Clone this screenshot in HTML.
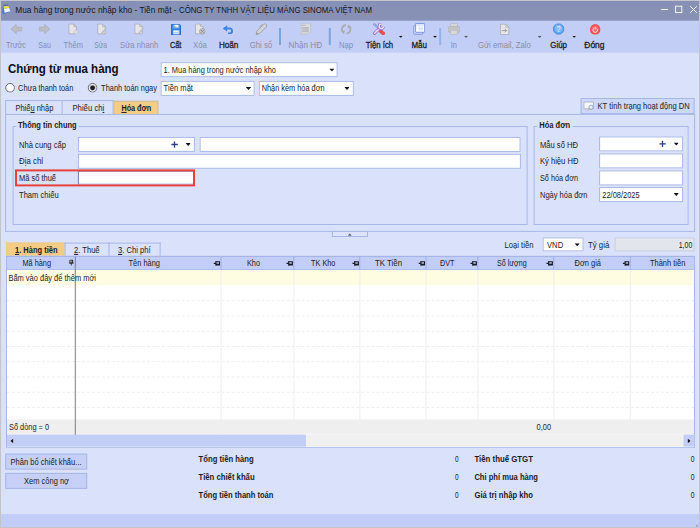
<!DOCTYPE html>
<html lang="vi"><head><meta charset="utf-8"><title>Mua hàng trong nước nhập kho - Tiền mặt</title>
<style>
html,body{margin:0;padding:0}
body{width:700px;height:528px;overflow:hidden;position:relative;background:#DAE1FA;font-family:"Liberation Sans",sans-serif}
.b{position:absolute;display:block;left:0;top:0}
.t{position:absolute;left:0;top:0;white-space:pre;transform-origin:0 0}
.t u{text-decoration-thickness:0.7px;text-underline-offset:0.6px}
.frame{position:absolute;left:0;top:0;width:700px;height:528px;box-sizing:border-box;border:1px solid #C3C4CC;pointer-events:none}
</style></head><body>
<div class="b" style="transform:translate(0px,0px);width:700.0px;height:20.7px;background:#8791B5"></div>
<div class="b" style="transform:translate(0px,20.7px);width:700.0px;height:32.3px;background:#C3CEF7"></div>
<div class="b" style="transform:translate(0px,514px);width:700.0px;height:14.0px;background:#C2CEF7"></div>
<div class="b" style="transform:translate(279.0px,28px);width:1.6px;height:16.5px;background:#79A5E2"></div>
<div class="b" style="transform:translate(328.8px,28px);width:1.6px;height:16.5px;background:#79A5E2"></div>
<div class="b" style="transform:translate(439.2px,28px);width:1.6px;height:16.5px;background:#8FB5E9"></div>
<div class="b" style="transform:translate(160.6px,62.2px);width:177.4px;height:14.6px;background:#fff;border:1px solid #A7B7E6;box-sizing:border-box"></div>
<div class="b" style="transform:translate(160.6px,80.9px);width:94.4px;height:14.9px;background:#fff;border:1px solid #A7B7E6;box-sizing:border-box"></div>
<div class="b" style="transform:translate(258.8px,80.9px);width:95.3px;height:14.9px;background:#fff;border:1px solid #A7B7E6;box-sizing:border-box"></div>
<div class="b" style="transform:translate(5.1px,100.1px);width:57.8px;height:14.3px;background:#DAE1FA;border:1px solid #A7B7E6;box-sizing:border-box;border-bottom:none"></div>
<div class="b" style="transform:translate(61.6px,100.1px);width:51.8px;height:14.3px;background:#DAE1FA;border:1px solid #A7B7E6;box-sizing:border-box;border-bottom:none"></div>
<div class="b" style="transform:translate(113.4px,100.8px);width:45.4px;height:14.2px;background:#F5CC84;border:1px solid #C9BFA8;box-sizing:border-box;border-bottom:none"></div>
<div class="b" style="transform:translate(5.1px,113.9px);width:690.3px;height:117.5px;border:1px solid #A7B7E6;box-sizing:border-box"></div>
<div class="b" style="transform:translate(580.6px,98.0px);width:114.4px;height:16.4px;background:#CDD7F8;border:1px solid #A7B7E6;box-sizing:border-box"></div>
<div class="b" style="transform:translate(12.6px,126.0px);width:514.6px;height:98.8px;border:1px solid #A7B7E6;box-sizing:border-box"></div>
<div class="b" style="transform:translate(533.6px,126.0px);width:155.4px;height:98.8px;border:1px solid #A7B7E6;box-sizing:border-box"></div>
<div class="b" style="transform:translate(16.5px,122px);width:62.0px;height:8.0px;background:#DAE1FA"></div>
<div class="b" style="transform:translate(537.5px,122px);width:34.5px;height:8.0px;background:#DAE1FA"></div>
<div class="b" style="transform:translate(77.9px,136.9px);width:117.0px;height:14.9px;background:#fff;border:1px solid #A7B7E6;box-sizing:border-box"></div>
<div class="b" style="transform:translate(199.6px,136.9px);width:321.4px;height:14.9px;background:#fff;border:1px solid #A7B7E6;box-sizing:border-box"></div>
<div class="b" style="transform:translate(77.9px,153.8px);width:443.1px;height:14.6px;background:#fff;border:1px solid #A7B7E6;box-sizing:border-box"></div>
<div class="b" style="transform:translate(77.9px,170.6px);width:117.0px;height:14.4px;background:#fff;border:1px solid #6C78A8;box-sizing:border-box;border-right-color:#A7B7E6;border-bottom-color:#A7B7E6"></div>
<div class="b" style="transform:translate(15px,169.4px);width:180.4px;height:17.2px;box-sizing:border-box;border:2px solid #E8423C"></div>
<div class="b" style="transform:translate(599.1px,136.4px);width:83.9px;height:14.7px;background:#fff;border:1px solid #A7B7E6;box-sizing:border-box"></div>
<div class="b" style="transform:translate(599.1px,153.4px);width:83.9px;height:14.8px;background:#fff;border:1px solid #A7B7E6;box-sizing:border-box"></div>
<div class="b" style="transform:translate(599.1px,170.4px);width:83.9px;height:14.6px;background:#fff;border:1px solid #A7B7E6;box-sizing:border-box"></div>
<div class="b" style="transform:translate(599.1px,187.1px);width:83.9px;height:14.8px;background:#fff;border:1px solid #A7B7E6;box-sizing:border-box"></div>
<div class="b" style="transform:translate(332.0px,231.0px);width:35.8px;height:6.0px;background:#DCE3FA;border:1px solid #A7B7E6;box-sizing:border-box"></div>
<div class="b" style="transform:translate(542.6px,237.4px);width:41.0px;height:14.2px;background:#fff;border:1px solid #A7B7E6;box-sizing:border-box"></div>
<div class="b" style="transform:translate(614.6px,237.4px);width:79.6px;height:14.2px;background:#E3E5EC;border:1px solid #C5CCE4;box-sizing:border-box"></div>
<div class="b" style="transform:translate(6.0px,242.6px);width:59.9px;height:14.8px;background:#F5CC84;border:1px solid #E8C987;box-sizing:border-box;border-bottom:none"></div>
<div class="b" style="transform:translate(64.6px,242.6px);width:45.3px;height:14.8px;background:#DAE1FA;border:1px solid #A7B7E6;box-sizing:border-box;border-bottom:none"></div>
<div class="b" style="transform:translate(108.6px,242.6px);width:51.8px;height:14.8px;background:#DAE1FA;border:1px solid #A7B7E6;box-sizing:border-box;border-bottom:none"></div>
<div class="b" style="transform:translate(6.0px,255.8px);width:689.2px;height:191.8px;background:#fff;border:1px solid #A7B7E6;box-sizing:border-box"></div>
<div class="b" style="transform:translate(7px,256.7px);width:687.0px;height:12.7px;background:#C3CEF7"></div>
<div class="b" style="transform:translate(6.4px,255.9px);width:688.4px;height:1.0px;background:#A3B3E8"></div>
<div class="b" style="transform:translate(6px,269.2px);width:689.0px;height:0.8px;background:#A7B7E6"></div>
<div class="b" style="transform:translate(7px,270px);width:687.0px;height:15.0px;background:#FFFDE1"></div>
<div class="b" style="transform:translate(7px,419.4px);width:687.0px;height:15.2px;background:#EFEFEF"></div>
<div class="b" style="transform:translate(7px,434.6px);width:687.0px;height:11.8px;background:#F0F0F0"></div>
<div class="b" style="transform:translate(7px,434.6px);width:298.6px;height:11.8px;background:#C3CEF7"></div>
<div class="b" style="transform:translate(683.5px,434.6px);width:10.5px;height:11.8px;background:#C3CEF7"></div>
<div class="b" style="transform:translate(7px,300.25px);width:687.0px;height:0.8px;border-top:0.8px dashed #EEEEEE;height:0"></div>
<div class="b" style="transform:translate(7px,315.5px);width:687.0px;height:0.8px;border-top:0.8px dashed #EEEEEE;height:0"></div>
<div class="b" style="transform:translate(7px,330.75px);width:687.0px;height:0.8px;border-top:0.8px dashed #EEEEEE;height:0"></div>
<div class="b" style="transform:translate(7px,346.0px);width:687.0px;height:0.8px;border-top:0.8px dashed #EEEEEE;height:0"></div>
<div class="b" style="transform:translate(7px,361.25px);width:687.0px;height:0.8px;border-top:0.8px dashed #EEEEEE;height:0"></div>
<div class="b" style="transform:translate(7px,376.5px);width:687.0px;height:0.8px;border-top:0.8px dashed #EEEEEE;height:0"></div>
<div class="b" style="transform:translate(7px,391.75px);width:687.0px;height:0.8px;border-top:0.8px dashed #EEEEEE;height:0"></div>
<div class="b" style="transform:translate(7px,407.0px);width:687.0px;height:0.8px;border-top:0.8px dashed #EEEEEE;height:0"></div>
<div class="b" style="transform:translate(220.5px,256.8px);width:1.2px;height:12.6px;background:#9DAEE4"></div>
<div class="b" style="transform:translate(220.6px,270px);width:0.8px;height:164.6px;border-left:0.8px solid #EEEEEE;width:0"></div>
<div class="b" style="transform:translate(293.29999999999995px,256.8px);width:1.2px;height:12.6px;background:#9DAEE4"></div>
<div class="b" style="transform:translate(293.4px,270px);width:0.8px;height:164.6px;border-left:0.8px solid #EEEEEE;width:0"></div>
<div class="b" style="transform:translate(359.29999999999995px,256.8px);width:1.2px;height:12.6px;background:#9DAEE4"></div>
<div class="b" style="transform:translate(359.4px,270px);width:0.8px;height:164.6px;border-left:0.8px solid #EEEEEE;width:0"></div>
<div class="b" style="transform:translate(425.5px,256.8px);width:1.2px;height:12.6px;background:#9DAEE4"></div>
<div class="b" style="transform:translate(425.6px,270px);width:0.8px;height:164.6px;border-left:0.8px solid #EEEEEE;width:0"></div>
<div class="b" style="transform:translate(477.29999999999995px,256.8px);width:1.2px;height:12.6px;background:#9DAEE4"></div>
<div class="b" style="transform:translate(477.4px,270px);width:0.8px;height:164.6px;border-left:0.8px solid #EEEEEE;width:0"></div>
<div class="b" style="transform:translate(553.3px,256.8px);width:1.2px;height:12.6px;background:#9DAEE4"></div>
<div class="b" style="transform:translate(553.4px,270px);width:0.8px;height:164.6px;border-left:0.8px solid #EEEEEE;width:0"></div>
<div class="b" style="transform:translate(629.6999999999999px,256.8px);width:1.2px;height:12.6px;background:#9DAEE4"></div>
<div class="b" style="transform:translate(629.8px,270px);width:0.8px;height:164.6px;border-left:0.8px solid #EEEEEE;width:0"></div>
<div class="b" style="transform:translate(74.8px,256.8px);width:1.2px;height:177.8px;background:#7e7e7e"></div>
<div class="b" style="transform:translate(5.2px,453.6px);width:82.2px;height:16.4px;background:#C6D0F7;border:1px solid #A7B7E6;box-sizing:border-box"></div>
<div class="b" style="transform:translate(5.2px,472.9px);width:82.2px;height:16.3px;background:#C6D0F7;border:1px solid #A7B7E6;box-sizing:border-box"></div>
<svg class="b" style="transform:translate(329.2px,68.6px)" width="5.4" height="3" viewBox="0 0 5.4 3"><path d="M0 0H5.4L2.7 3Z" fill="#111"/></svg>
<svg class="b" style="transform:translate(245.8px,87px)" width="5.4" height="3" viewBox="0 0 5.4 3"><path d="M0 0H5.4L2.7 3Z" fill="#111"/></svg>
<svg class="b" style="transform:translate(344.3px,87px)" width="5.4" height="3" viewBox="0 0 5.4 3"><path d="M0 0H5.4L2.7 3Z" fill="#111"/></svg>
<svg class="b" style="transform:translate(185.5px,143px)" width="5.4" height="3" viewBox="0 0 5.4 3"><path d="M0 0H5.4L2.7 3Z" fill="#111"/></svg>
<svg class="b" style="transform:translate(673.6px,142.5px)" width="5.4" height="3" viewBox="0 0 5.4 3"><path d="M0 0H5.4L2.7 3Z" fill="#111"/></svg>
<svg class="b" style="transform:translate(673.6px,193px)" width="5.4" height="3" viewBox="0 0 5.4 3"><path d="M0 0H5.4L2.7 3Z" fill="#111"/></svg>
<svg class="b" style="transform:translate(574.5px,243.2px)" width="5.4" height="3" viewBox="0 0 5.4 3"><path d="M0 0H5.4L2.7 3Z" fill="#111"/></svg>
<svg class="b" style="transform:translate(171.2px,141.2px)" width="6.6" height="6.6" viewBox="0 0 6.6 6.6"><path d="M3.3 0V6.6M0 3.3H6.6" stroke="#2B3C8C" stroke-width="1.3" fill="none"/></svg>
<svg class="b" style="transform:translate(659.2px,140.6px)" width="6.6" height="6.6" viewBox="0 0 6.6 6.6"><path d="M3.3 0V6.6M0 3.3H6.6" stroke="#2B3C8C" stroke-width="1.3" fill="none"/></svg>
<svg class="b" style="transform:translate(398.8px,35.8px)" width="4" height="2.2" viewBox="0 0 4 2.2"><path d="M0 0H4L2.0 2.2Z" fill="#111"/></svg>
<svg class="b" style="transform:translate(433px,35.8px)" width="4" height="2.2" viewBox="0 0 4 2.2"><path d="M0 0H4L2.0 2.2Z" fill="#111"/></svg>
<svg class="b" style="transform:translate(463.9px,35.8px)" width="4.4" height="2.4" viewBox="0 0 4.4 2.4"><path d="M0 0H4.4L2.2 2.4Z" fill="#5c5e70"/></svg>
<svg class="b" style="transform:translate(537.5px,35.8px)" width="4.4" height="2.4" viewBox="0 0 4.4 2.4"><path d="M0 0H4.4L2.2 2.4Z" fill="#5c5e70"/></svg>
<svg class="b" style="transform:translate(572.2px,35.8px)" width="4" height="2.2" viewBox="0 0 4 2.2"><path d="M0 0H4L2.0 2.2Z" fill="#111"/></svg>
<svg class="b" style="transform:translate(69px,259.6px)" width="4.6" height="6.4" viewBox="0 0 4.6 6.4"><path d="M0.9 0.4H3.7V3.4H0.9ZM0 3.6H4.6M2.3 3.6V6.4" stroke="#222" stroke-width="0.8" fill="none"/><rect x="2.6" y="0.4" width="1.1" height="3" fill="#222"/></svg>
<svg class="b" style="transform:translate(213.5px,260.6px)" width="6.6" height="5.5" viewBox="0 0 6 5"><path d="M0 2.5H2.2M2.2 0.3V4.7M2.2 1H5.5V4H2.2" stroke="#1a1a22" stroke-width="1" fill="none"/><rect x="2.2" y="2.8" width="3.3" height="1.2" fill="#1a1a22"/></svg>
<svg class="b" style="transform:translate(286.3px,260.6px)" width="6.6" height="5.5" viewBox="0 0 6 5"><path d="M0 2.5H2.2M2.2 0.3V4.7M2.2 1H5.5V4H2.2" stroke="#1a1a22" stroke-width="1" fill="none"/><rect x="2.2" y="2.8" width="3.3" height="1.2" fill="#1a1a22"/></svg>
<svg class="b" style="transform:translate(352.3px,260.6px)" width="6.6" height="5.5" viewBox="0 0 6 5"><path d="M0 2.5H2.2M2.2 0.3V4.7M2.2 1H5.5V4H2.2" stroke="#1a1a22" stroke-width="1" fill="none"/><rect x="2.2" y="2.8" width="3.3" height="1.2" fill="#1a1a22"/></svg>
<svg class="b" style="transform:translate(418.5px,260.6px)" width="6.6" height="5.5" viewBox="0 0 6 5"><path d="M0 2.5H2.2M2.2 0.3V4.7M2.2 1H5.5V4H2.2" stroke="#1a1a22" stroke-width="1" fill="none"/><rect x="2.2" y="2.8" width="3.3" height="1.2" fill="#1a1a22"/></svg>
<svg class="b" style="transform:translate(470.3px,260.6px)" width="6.6" height="5.5" viewBox="0 0 6 5"><path d="M0 2.5H2.2M2.2 0.3V4.7M2.2 1H5.5V4H2.2" stroke="#1a1a22" stroke-width="1" fill="none"/><rect x="2.2" y="2.8" width="3.3" height="1.2" fill="#1a1a22"/></svg>
<svg class="b" style="transform:translate(546.3000000000001px,260.6px)" width="6.6" height="5.5" viewBox="0 0 6 5"><path d="M0 2.5H2.2M2.2 0.3V4.7M2.2 1H5.5V4H2.2" stroke="#1a1a22" stroke-width="1" fill="none"/><rect x="2.2" y="2.8" width="3.3" height="1.2" fill="#1a1a22"/></svg>
<svg class="b" style="transform:translate(622.7px,260.6px)" width="6.6" height="5.5" viewBox="0 0 6 5"><path d="M0 2.5H2.2M2.2 0.3V4.7M2.2 1H5.5V4H2.2" stroke="#1a1a22" stroke-width="1" fill="none"/><rect x="2.2" y="2.8" width="3.3" height="1.2" fill="#1a1a22"/></svg>
<svg class="b" style="transform:translate(10.4px,438.6px)" width="3" height="4.6" viewBox="0 0 3 4.6"><path d="M3 0V4.6L0 2.3Z" fill="#111"/></svg>
<svg class="b" style="transform:translate(687.6px,438.6px)" width="3" height="4.6" viewBox="0 0 3 4.6"><path d="M0 0V4.6L3 2.3Z" fill="#111"/></svg>
<svg class="b" style="transform:translate(347.8px,233.2px)" width="4" height="2.6" viewBox="0 0 4 2.4"><path d="M0 2.4H4L2 0Z" fill="#5f6484"/></svg>
<svg class="b" style="transform:translate(4.85px,82.6px)" width="10.4" height="10.4" viewBox="0 0 10.4 10.4"><circle cx="5.2" cy="5.2" r="4.35" fill="#fff" stroke="#62636c" stroke-width="1"/></svg>
<svg class="b" style="transform:translate(87.4px,82.6px)" width="10.4" height="10.4" viewBox="0 0 10.4 10.4"><circle cx="5.2" cy="5.2" r="4.35" fill="#fff" stroke="#62636c" stroke-width="1"/><circle cx="5.2" cy="5.2" r="3.3" fill="#c9cad0"/><circle cx="5.2" cy="5.2" r="2.4" fill="#1c1c22"/></svg>
<svg class="b" style="transform:translate(660px,4px)" width="40" height="12" viewBox="0 0 40 12"><path d="M1.2 5.5H8" stroke="#fff" stroke-width="0.9" fill="none"/><rect x="15.6" y="2.2" width="6.2" height="6.4" stroke="#fff" stroke-width="0.9" fill="none"/><path d="M30.2 2.2L36.8 8.8M36.8 2.2L30.2 8.8" stroke="#fff" stroke-width="0.9" fill="none"/></svg>
<svg class="b" style="transform:translate(2px,4px)" width="10" height="11" viewBox="0 0 10 11"><path d="M1 1.2L6.2 0.8L9.2 7.6L1.4 10.3L0.2 8.8Z" fill="#5275E0"/><path d="M1.6 2.2L6.4 1.8L7.2 4L2 4.8Z" fill="#FFD84A"/><path d="M2 4.8L7.2 4L8.6 7.2L2.6 8.7Z" fill="#EEF6FF"/><path d="M2.3 0.5V1.7M3.9 0.4V1.6M5.5 0.3V1.5" stroke="#4a507a" stroke-width="0.6"/></svg>
<svg class="b" style="transform:translate(10.6px,23.8px)" width="11.6" height="10.6" viewBox="0 0 11.6 10.6"><path d="M0.4 5.3L5.6 0.5V3.3H11.1V7.3H5.6V10.1Z" fill="#BABDC6" stroke="#A6A9B4" stroke-width="0.6"/></svg>
<svg class="b" style="transform:translate(38.6px,23.8px)" width="11.6" height="10.6" viewBox="0 0 11.6 10.6"><path d="M11.2 5.3L6 0.5V3.3H0.5V7.3H6V10.1Z" fill="#BABDC6" stroke="#A6A9B4" stroke-width="0.6"/></svg>
<svg class="b" style="transform:translate(68px,23.2px)" width="11" height="12" viewBox="0 0 11 12"><path d="M0.9 0.8H5.8L8.4 3.4V10.6H0.9Z" fill="#E6E6E9" stroke="#A8A9B2" stroke-width="0.8"/><path d="M5.8 0.8V3.4H8.4" fill="none" stroke="#A8A9B2" stroke-width="0.7"/><circle cx="8" cy="8.8" r="2.1" fill="#DCDDE2" stroke="#C0C1C8" stroke-width="0.6"/></svg>
<svg class="b" style="transform:translate(96.8px,23.2px)" width="11" height="12" viewBox="0 0 11 12"><path d="M0.9 0.8H5.8L8.4 3.4V10.6H0.9Z" fill="#E6E6E9" stroke="#A8A9B2" stroke-width="0.8"/><path d="M5.8 0.8V3.4H8.4" fill="none" stroke="#A8A9B2" stroke-width="0.7"/><path d="M4.2 10.8L9.4 5.2" stroke="#BFC0C8" stroke-width="1.8"/></svg>
<svg class="b" style="transform:translate(134px,23.2px)" width="11" height="12" viewBox="0 0 11 12"><path d="M0.9 0.8H5.8L8.4 3.4V10.6H0.9Z" fill="#E6E6E9" stroke="#A8A9B2" stroke-width="0.8"/><path d="M5.8 0.8V3.4H8.4" fill="none" stroke="#A8A9B2" stroke-width="0.7"/><path d="M4.2 10.8L9.6 5" stroke="#BFC0C8" stroke-width="1.8"/></svg>
<svg class="b" style="transform:translate(171px,24px)" width="10.4" height="11" viewBox="0 0 10.4 11"><path d="M0 0.6Q0 0 0.6 0H8.4L10.4 2V10.4Q10.4 11 9.8 11H0.6Q0 11 0 10.4Z" fill="#2A6CD6"/><rect x="1.2" y="0.8" width="7.6" height="9.4" fill="#3F80DE"/><rect x="1.8" y="0.8" width="6.6" height="3.6" fill="#7AA9EA"/><path d="M3.6 0.8H7.4V3.2H5L3.6 2Z" fill="#F2F7FF"/><rect x="2" y="6" width="6.4" height="4.4" fill="#B0CAF3"/><rect x="2.6" y="7" width="5.2" height="1" fill="#E4EEFC"/><rect x="2.6" y="8.8" width="5.2" height="0.9" fill="#D6E4FA"/></svg>
<svg class="b" style="transform:translate(194.6px,23.2px)" width="11.4" height="12" viewBox="0 0 11.4 12"><path d="M0.9 0.8H5.8L8.4 3.4V10.6H0.9Z" fill="#E6E6E9" stroke="#A8A9B2" stroke-width="0.8"/><path d="M5.8 0.8V3.4H8.4" fill="none" stroke="#A8A9B2" stroke-width="0.7"/><circle cx="7.8" cy="8.2" r="2.8" fill="#C6C7CC" stroke="#9C9DA5" stroke-width="0.8"/><path d="M6.4 6.8L9.2 9.6M9.2 6.8L6.4 9.6" stroke="#85868E" stroke-width="0.9"/></svg>
<svg class="b" style="transform:translate(222.6px,25px)" width="11.8" height="9.4" viewBox="0 0 11.8 9.4"><path d="M4.4 3.4H7.6A2.6 2.6 0 0 1 7.6 8.4H5.4" fill="none" stroke="#3B82E8" stroke-width="2"/><path d="M0.2 3.4L4.6 0.2V6.6Z" fill="#3B82E8"/></svg>
<svg class="b" style="transform:translate(255.4px,23.2px)" width="12" height="12" viewBox="0 0 12 12"><path d="M0.6 11.4L1.6 7.6L8.2 1Q9.6 0 10.9 1.3Q12 2.6 10.8 3.8L4.4 10.2Z" fill="#D2D2D6" stroke="#9C9DA6" stroke-width="0.9"/><path d="M7.6 1.2L4.4 3.4L5 4.2" fill="none" stroke="#9C9DA6" stroke-width="0.8"/><path d="M0.6 11.4L1.3 8.8L3.2 10.6Z" fill="#9C9DA6"/></svg>
<svg class="b" style="transform:translate(300.6px,23.2px)" width="10.6" height="11.6" viewBox="0 0 10.6 11.6"><path d="M0.6 0.5H10V8.6L7.6 11H0.6Z" fill="#DCDCDF" stroke="#BCBDC4" stroke-width="0.8"/><rect x="1.6" y="4.4" width="6.8" height="4.2" fill="#C2C3C8"/><path d="M1.6 4.4H8.4M1.6 8.6H8.4" stroke="#AEAFB6" stroke-width="0.7"/><rect x="1.4" y="1.6" width="3.4" height="1" fill="#B4B5BC"/></svg>
<svg class="b" style="transform:translate(340.4px,23.8px)" width="11.6" height="11" viewBox="0 0 11.6 11"><path d="M5.6 1.2Q1.4 1.6 1.6 6.4L2.4 8" fill="none" stroke="#ABACB4" stroke-width="1.9"/><path d="M6 9.8Q10.2 9.4 10 4.6L9.2 3" fill="none" stroke="#ABACB4" stroke-width="1.9"/><path d="M0.2 7.2L4.6 6.6L3.6 10.4Z" fill="#ABACB4"/><path d="M11.4 3.8L7 4.4L8 0.6Z" fill="#ABACB4"/></svg>
<svg class="b" style="transform:translate(373px,23px)" width="12.4" height="12" viewBox="0 0 12.4 12"><path d="M2.2 2.2L6.6 6.6" stroke="#7C98DC" stroke-width="1.1"/><ellipse cx="1.9" cy="1.9" rx="1.9" ry="1.3" transform="rotate(45 1.9 1.9)" fill="#7C98DC"/><circle cx="1.8" cy="1.9" r="0.5" fill="#EAF0FF"/><path d="M7.8 8.4L10.2 10.4" stroke="#E25252" stroke-width="3.8" stroke-linecap="round"/><path d="M1.5 10.4L6.9 5.1" stroke="#9468C8" stroke-width="3" stroke-linecap="round"/><path d="M1.6 10.3L6.9 5.1" stroke="#F1E4FF" stroke-width="1.5" stroke-linecap="round"/><path d="M10.43 3.87A2.2 2.2 0 1 1 8.68 1.13" fill="none" stroke="#9468C8" stroke-width="3.1"/><path d="M10.43 3.87A2.2 2.2 0 1 1 8.68 1.13" fill="none" stroke="#F1E4FF" stroke-width="1.5"/></svg>
<svg class="b" style="transform:translate(413.2px,23px)" width="12" height="12" viewBox="0 0 12 12"><rect x="0.5" y="2.6" width="9" height="8.6" rx="0.8" fill="#D3DCFA" stroke="#6C86DC" stroke-width="0.8"/><rect x="2.2" y="0.5" width="9.3" height="8.8" rx="0.8" fill="#DDE5FC" stroke="#6C86DC" stroke-width="0.8"/><rect x="3.2" y="2.8" width="7.6" height="5.6" fill="#fff"/><path d="M5.2 4.2H10M5.2 5.6H10M5.2 7H10" stroke="#BBD0F4" stroke-width="0.7"/></svg>
<svg class="b" style="transform:translate(448px,23px)" width="12" height="12" viewBox="0 0 12 12"><rect x="2.6" y="0.5" width="6.8" height="3.6" rx="0.6" fill="#D8D8DA" stroke="#B4B5BB" stroke-width="0.6"/><rect x="0.4" y="3.4" width="11.2" height="5.8" rx="1.2" fill="#C2C3C8" stroke="#AEAFB6" stroke-width="0.6"/><rect x="2.6" y="7.2" width="6.8" height="4.3" rx="0.6" fill="#D8D8DA" stroke="#B4B5BB" stroke-width="0.6"/></svg>
<svg class="b" style="transform:translate(499.8px,23.6px)" width="10" height="11.6" viewBox="0 0 10 11.6"><path d="M0.6 0.6H6L9 3.6V11H0.6Z" fill="#E6E6E8" stroke="#A9AAB0" stroke-width="0.8"/><path d="M6 0.6V3.6H9" fill="none" stroke="#A9AAB0" stroke-width="0.7"/><path d="M2 7H6.6M5 5.4L6.8 7L5 8.6" fill="none" stroke="#9A9BA2" stroke-width="0.9"/></svg>
<svg class="b" style="transform:translate(552.8px,23.2px)" width="11.6" height="11.6" viewBox="0 0 11.6 11.6"><circle cx="5.8" cy="5.8" r="5.3" fill="#5FA4F2" stroke="#4288E4" stroke-width="0.8"/><circle cx="5.8" cy="5.4" r="3.8" fill="#8CC0F9" opacity="0.75"/></svg>
<svg class="b" style="transform:translate(589.6px,23.8px)" width="11.2" height="11.2" viewBox="0 0 11.2 11.2"><circle cx="5.6" cy="5.6" r="5.3" fill="#EA5656"/><circle cx="5.6" cy="5.6" r="3.4" fill="#F07878" opacity="0.7"/><path d="M4 4.6A2.3 2.3 0 1 0 7.2 4.6" fill="none" stroke="#FFE4E4" stroke-width="0.9"/><path d="M5.6 3V5.6" stroke="#FFE4E4" stroke-width="0.9"/></svg>
<svg class="b" style="transform:translate(583.4px,101px)" width="12" height="10" viewBox="0 0 12 10"><rect x="0.5" y="1" width="9.4" height="6.8" fill="#F4F6FC" stroke="#9AA4C0" stroke-width="0.7"/><circle cx="7.6" cy="6.2" r="2" fill="#EAF2FF" stroke="#7E90C4" stroke-width="0.7"/><path d="M6.2 7.8L4.8 9.4" stroke="#C9A24A" stroke-width="1"/></svg>
<svg class="b" style="transform:translate(693px,521px)" width="6" height="6" viewBox="0 0 6 6"><rect x="3.2" y="4.4" width="1.1" height="1.1" fill="#5a6488"/><rect x="4.8" y="2.8" width="1" height="1" fill="#aab4d8"/><rect x="4.8" y="4.4" width="1" height="1" fill="#aab4d8"/></svg>

<span class="t" style="transform:translate(15.3px,6.04px) scaleX(1.0025);font-size:8.3px;line-height:9.96px;color:#15151f">Mua hàng trong nước nhập kho - Tiền mặt -</span>
<span class="t" style="transform:translate(179.0px,6.04px) scaleX(0.9421);font-size:8.3px;line-height:9.96px;color:#15151f">CÔNG TY TNHH VẬT LIỆU MÀNG SINOMA VIỆT NAM</span>
<span class="t" style="transform:translate(6.0px,39.75px) scaleX(0.8737);font-size:8.4px;line-height:10.08px;color:#8A8DA8">Trước</span>
<span class="t" style="transform:translate(38.3px,39.75px) scaleX(0.8520);font-size:8.4px;line-height:10.08px;color:#8A8DA8">Sau</span>
<span class="t" style="transform:translate(63.6px,39.75px) scaleX(0.9056);font-size:8.4px;line-height:10.08px;color:#8A8DA8">Thêm</span>
<span class="t" style="transform:translate(94.3px,39.75px) scaleX(0.8008);font-size:8.4px;line-height:10.08px;color:#8A8DA8">Sửa</span>
<span class="t" style="transform:translate(120.0px,39.75px) scaleX(0.9236);font-size:8.4px;line-height:10.08px;color:#8A8DA8">Sửa nhanh</span>
<span class="t" style="transform:translate(170.0px,39.75px) scaleX(0.8738);font-size:8.4px;line-height:10.08px;color:#1c1c28;-webkit-text-stroke:0.28px #1c1c28">Cất</span>
<span class="t" style="transform:translate(193.1px,39.75px) scaleX(0.9258);font-size:8.4px;line-height:10.08px;color:#8A8DA8">Xóa</span>
<span class="t" style="transform:translate(218.9px,39.75px) scaleX(0.9685);font-size:8.4px;line-height:10.08px;color:#1c1c28;-webkit-text-stroke:0.28px #1c1c28">Hoãn</span>
<span class="t" style="transform:translate(249.7px,39.75px) scaleX(0.9249);font-size:8.4px;line-height:10.08px;color:#8A8DA8">Ghi sổ</span>
<span class="t" style="transform:translate(288.6px,39.75px) scaleX(0.9723);font-size:8.4px;line-height:10.08px;color:#8A8DA8">Nhận HĐ</span>
<span class="t" style="transform:translate(338.9px,39.75px) scaleX(0.9236);font-size:8.4px;line-height:10.08px;color:#8A8DA8">Nạp</span>
<span class="t" style="transform:translate(365.7px,39.75px) scaleX(0.9293);font-size:8.4px;line-height:10.08px;color:#1c1c28;-webkit-text-stroke:0.28px #1c1c28">Tiện ích</span>
<span class="t" style="transform:translate(411.4px,39.75px) scaleX(0.9511);font-size:8.4px;line-height:10.08px;color:#1c1c28;-webkit-text-stroke:0.28px #1c1c28">Mẫu</span>
<span class="t" style="transform:translate(450.7px,39.75px) scaleX(0.8857);font-size:8.4px;line-height:10.08px;color:#8A8DA8">In</span>
<span class="t" style="transform:translate(477.9px,39.75px) scaleX(0.9218);font-size:8.4px;line-height:10.08px;color:#8A8DA8">Gửi email, Zalo</span>
<span class="t" style="transform:translate(550.3px,39.75px) scaleX(0.9377);font-size:8.4px;line-height:10.08px;color:#1c1c28;-webkit-text-stroke:0.28px #1c1c28">Giúp</span>
<span class="t" style="transform:translate(584.3px,39.75px) scaleX(1.0084);font-size:8.4px;line-height:10.08px;color:#1c1c28;-webkit-text-stroke:0.28px #1c1c28">Đóng</span>
<span class="t" style="transform:translate(556.7px,23.40px) scaleX(0.7281);font-size:9.4px;line-height:11.28px;color:#f4f9ff">?</span>
<span class="t" style="transform:translate(8.0px,62.47px) scaleX(0.9202);font-size:12.5px;line-height:15.0px;color:#0c0c14;font-weight:700">Chứng từ mua hàng</span>
<span class="t" style="transform:translate(18.1px,82.95px) scaleX(0.8648);font-size:8.5px;line-height:10.2px;color:#1c1c28">Chưa thanh toán</span>
<span class="t" style="transform:translate(101.1px,82.95px) scaleX(0.8744);font-size:8.5px;line-height:10.2px;color:#1c1c28">Thanh toán ngay</span>
<span class="t" style="transform:translate(163.6px,64.75px) scaleX(0.8717);font-size:8.5px;line-height:10.2px;color:#1c1c28">1. Mua hàng trong nước nhập kho</span>
<span class="t" style="transform:translate(163.6px,83.45px) scaleX(0.8973);font-size:8.5px;line-height:10.2px;color:#1c1c28">Tiền mặt</span>
<span class="t" style="transform:translate(261.7px,83.45px) scaleX(0.8653);font-size:8.5px;line-height:10.2px;color:#1c1c28">Nhận kèm hóa đơn</span>
<span class="t" style="transform:translate(15.4px,102.95px) scaleX(0.8831);font-size:8.5px;line-height:10.2px;color:#1c1c28">Phiế<u>u</u> nhập</span>
<span class="t" style="transform:translate(72.4px,102.95px) scaleX(0.9118);font-size:8.5px;line-height:10.2px;color:#1c1c28">Phiếu ch<u>i</u></span>
<span class="t" style="transform:translate(121.4px,102.95px) scaleX(0.8520);font-size:8.5px;line-height:10.2px;color:#1c1c28;font-weight:700"><u>H</u>óa đơn</span>
<span class="t" style="transform:translate(597.6px,101.45px) scaleX(0.8862);font-size:8.5px;line-height:10.2px;color:#1c1c28">KT tình trạng hoạt động DN</span>
<span class="t" style="transform:translate(18.0px,120.45px) scaleX(0.8802);font-size:8.5px;line-height:10.2px;color:#1c1c28;font-weight:700">Thông tin chung</span>
<span class="t" style="transform:translate(19.0px,139.75px) scaleX(0.8960);font-size:8.5px;line-height:10.2px;color:#1c1c28">Nhà cung cấp</span>
<span class="t" style="transform:translate(19.0px,156.45px) scaleX(0.9236);font-size:8.5px;line-height:10.2px;color:#1c1c28">Địa chỉ</span>
<span class="t" style="transform:translate(19.0px,173.05px) scaleX(0.8796);font-size:8.5px;line-height:10.2px;color:#1c1c28">Mã số thuế</span>
<span class="t" style="transform:translate(19.0px,189.85px) scaleX(0.8915);font-size:8.5px;line-height:10.2px;color:#1c1c28">Tham chiếu</span>
<span class="t" style="transform:translate(539.3px,120.45px) scaleX(0.8835);font-size:8.5px;line-height:10.2px;color:#1c1c28;font-weight:700">Hóa đơn</span>
<span class="t" style="transform:translate(540.0px,139.75px) scaleX(0.8914);font-size:8.5px;line-height:10.2px;color:#1c1c28">Mẫu số HĐ</span>
<span class="t" style="transform:translate(540.0px,156.45px) scaleX(0.8930);font-size:8.5px;line-height:10.2px;color:#1c1c28">Ký hiệu HĐ</span>
<span class="t" style="transform:translate(540.0px,173.05px) scaleX(0.8569);font-size:8.5px;line-height:10.2px;color:#1c1c28">Số hóa đơn</span>
<span class="t" style="transform:translate(540.0px,189.85px) scaleX(0.8813);font-size:8.5px;line-height:10.2px;color:#1c1c28">Ngày hóa đơn</span>
<span class="t" style="transform:translate(602.3px,189.85px) scaleX(0.8767);font-size:8.5px;line-height:10.2px;color:#1c1c28">22/08/2025</span>
<span class="t" style="transform:translate(504.6px,239.75px) scaleX(0.8961);font-size:8.5px;line-height:10.2px;color:#1c1c28">Loại tiền</span>
<span class="t" style="transform:translate(547.0px,239.75px) scaleX(0.9023);font-size:8.5px;line-height:10.2px;color:#1c1c28">VND</span>
<span class="t" style="transform:translate(588.1px,239.75px) scaleX(0.9112);font-size:8.5px;line-height:10.2px;color:#1c1c28">Tỷ giá</span>
<span class="t" style="transform:translate(678.7px,239.75px) scaleX(0.8219);font-size:8.5px;line-height:10.2px;color:#1c1c28">1,00</span>
<span class="t" style="transform:translate(15.0px,244.95px) scaleX(0.8840);font-size:8.5px;line-height:10.2px;color:#1c1c28;font-weight:700"><u>1</u>. Hàng tiền</span>
<span class="t" style="transform:translate(74.0px,244.95px) scaleX(0.8924);font-size:8.5px;line-height:10.2px;color:#1c1c28"><u>2</u>. Thuế</span>
<span class="t" style="transform:translate(118.0px,244.95px) scaleX(0.8931);font-size:8.5px;line-height:10.2px;color:#1c1c28"><u>3</u>. Chi phí</span>
<span class="t" style="transform:translate(22.4px,258.05px) scaleX(0.8642);font-size:8.5px;line-height:10.2px;color:#1c1c28">Mã hàng</span>
<span class="t" style="transform:translate(128.5px,258.05px) scaleX(0.8769);font-size:8.5px;line-height:10.2px;color:#1c1c28">Tên hàng</span>
<span class="t" style="transform:translate(247.0px,258.05px) scaleX(0.8595);font-size:8.5px;line-height:10.2px;color:#1c1c28">Kho</span>
<span class="t" style="transform:translate(311.0px,258.05px) scaleX(0.8604);font-size:8.5px;line-height:10.2px;color:#1c1c28">TK Kho</span>
<span class="t" style="transform:translate(375.0px,258.05px) scaleX(0.9216);font-size:8.5px;line-height:10.2px;color:#1c1c28">TK Tiền</span>
<span class="t" style="transform:translate(440.0px,258.05px) scaleX(0.8471);font-size:8.5px;line-height:10.2px;color:#1c1c28">ĐVT</span>
<span class="t" style="transform:translate(497.0px,258.05px) scaleX(0.8367);font-size:8.5px;line-height:10.2px;color:#1c1c28">Số lượng</span>
<span class="t" style="transform:translate(574.5px,258.05px) scaleX(0.8788);font-size:8.5px;line-height:10.2px;color:#1c1c28">Đơn giá</span>
<span class="t" style="transform:translate(649.9px,258.05px) scaleX(0.8812);font-size:8.5px;line-height:10.2px;color:#1c1c28">Thành tiền</span>
<span class="t" style="transform:translate(8.4px,273.05px) scaleX(0.8796);font-size:8.5px;line-height:10.2px;color:#1c1c28">Bấm vào đây để thêm mới</span>
<span class="t" style="transform:translate(9.0px,422.45px) scaleX(0.8678);font-size:8.5px;line-height:10.2px;color:#1c1c28">Số dòng = 0</span>
<span class="t" style="transform:translate(536.6px,422.45px) scaleX(0.8703);font-size:8.5px;line-height:10.2px;color:#1c1c28">0,00</span>
<span class="t" style="transform:translate(10.4px,456.95px) scaleX(0.8914);font-size:8.5px;line-height:10.2px;color:#1c1c28">Phân bổ chiết khấu...</span>
<span class="t" style="transform:translate(24.0px,476.15px) scaleX(0.8834);font-size:8.5px;line-height:10.2px;color:#1c1c28">Xem công nợ</span>
<span class="t" style="transform:translate(198.6px,454.45px) scaleX(0.9028);font-size:8.5px;line-height:10.2px;color:#1c1c28;font-weight:700">Tổng tiền hàng</span>
<span class="t" style="transform:translate(198.6px,472.15px) scaleX(0.9071);font-size:8.5px;line-height:10.2px;color:#1c1c28;font-weight:700">Tiền chiết khấu</span>
<span class="t" style="transform:translate(198.6px,489.95px) scaleX(0.8900);font-size:8.5px;line-height:10.2px;color:#1c1c28;font-weight:700">Tổng tiền thanh toán</span>
<span class="t" style="transform:translate(455.0px,454.45px) scaleX(0.7604);font-size:8.5px;line-height:10.2px;color:#1c1c28">0</span>
<span class="t" style="transform:translate(455.0px,472.15px) scaleX(0.7604);font-size:8.5px;line-height:10.2px;color:#1c1c28">0</span>
<span class="t" style="transform:translate(455.0px,489.95px) scaleX(0.7604);font-size:8.5px;line-height:10.2px;color:#1c1c28">0</span>
<span class="t" style="transform:translate(474.4px,454.45px) scaleX(0.9215);font-size:8.5px;line-height:10.2px;color:#1c1c28;font-weight:700">Tiền thuế GTGT</span>
<span class="t" style="transform:translate(474.4px,472.15px) scaleX(0.8918);font-size:8.5px;line-height:10.2px;color:#1c1c28;font-weight:700">Chi phí mua hàng</span>
<span class="t" style="transform:translate(474.4px,489.95px) scaleX(0.9057);font-size:8.5px;line-height:10.2px;color:#1c1c28;font-weight:700">Giá trị nhập kho</span>
<span class="t" style="transform:translate(690.8px,454.45px) scaleX(0.8026);font-size:8.5px;line-height:10.2px;color:#1c1c28">0</span>
<span class="t" style="transform:translate(690.8px,472.15px) scaleX(0.8026);font-size:8.5px;line-height:10.2px;color:#1c1c28">0</span>
<span class="t" style="transform:translate(690.8px,489.95px) scaleX(0.8026);font-size:8.5px;line-height:10.2px;color:#1c1c28">0</span>
<div class="frame"></div>
</body></html>
